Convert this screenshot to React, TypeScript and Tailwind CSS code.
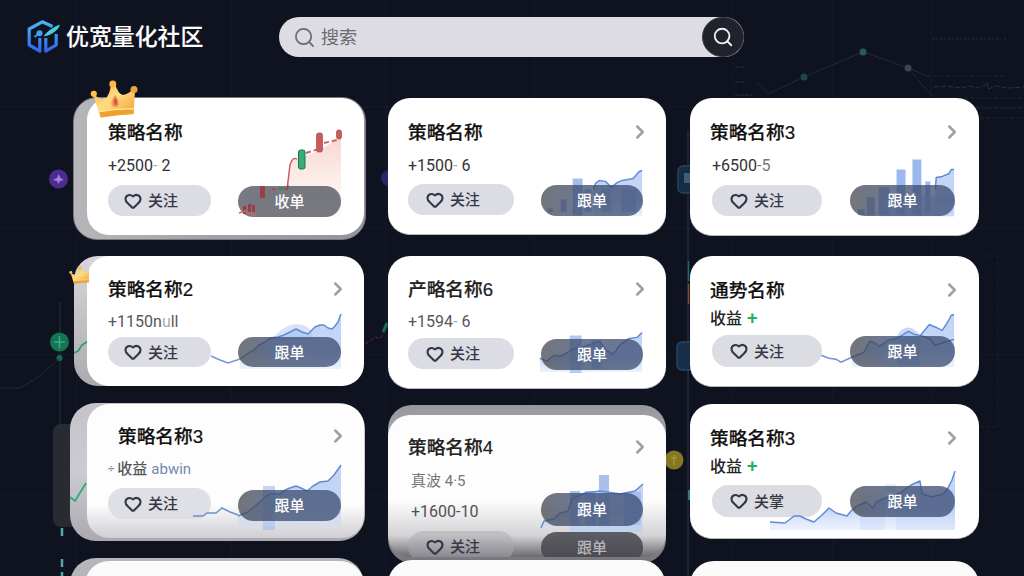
import type { ReactNode } from "react";
import { ChevronRight, Heart, Search } from "lucide-react";
import clsx from "clsx";

const fontCls = "font-['Liberation_Sans','Noto_Sans_CJK_SC',sans-serif]";

type CardProps = {
  title: string;
  className: string;
  // x, y, width, height of the card on the page, shared by its chart
  box: [number, number, number, number];
  titleCls?: string;
  chevron?: boolean;
  back?: ReactNode;
  chart?: ReactNode;
  children?: ReactNode;
};

function Card({ title, className, box, titleCls, chevron = true, back, chart, children }: CardProps) {
  return (
    <div className="relative shrink-0">
      {back}
      <article className={clsx("relative overflow-hidden rounded-[22px]", className)}>
        <svg className="absolute inset-0 h-full w-full" viewBox={box.join(" ")} fill="none">
          {chart}
        </svg>
        <div className="relative flex h-6 items-center justify-between">
          <h2 className={clsx("whitespace-nowrap pt-0.5 text-[18.7px] font-medium leading-6 [-webkit-text-stroke:0.2px]", titleCls ?? "text-[#111]")}>
            {title}
          </h2>
          {chevron && <ChevronRight className="-mr-[8px] size-[22px] text-[#a0a0a3]" strokeWidth={2.7} />}
        </div>
        {children}
      </article>
    </div>
  );
}

function Value({ children, className }: { children: ReactNode; className: string }) {
  return (
    <p className={clsx("relative flex h-5 items-center whitespace-nowrap pt-px font-[Roboto,'Noto_Sans_CJK_SC',sans-serif] text-base", className)}>
      {children}
    </p>
  );
}

function FollowPill({ className, label = "关注" }: { className: string; label?: string }) {
  return (
    <button className={clsx("flex items-center gap-[6px] rounded-full text-[15px] font-medium text-[#363745]", className)}>
      <Heart className="size-[18px]" strokeWidth={2.8} />
      <span className="leading-none">{label}</span>
    </button>
  );
}

function CopyPill({ className, label = "跟单" }: { className: string; label?: string }) {
  return (
    <button className={clsx("flex items-center justify-center rounded-full text-[15px] font-medium leading-none", className)}>
      {label}
    </button>
  );
}

const dark = "bg-gradient-to-r from-[#44474f]/75 via-[#3c4b6c]/75 via-35% to-[#394b71]/75 text-white";

function Area({ id, line, bottom, right }: { id: string; line: string; bottom: number; right: number }) {
  const startX = line.split(" ")[0].slice(1).split(",")[0];
  return (
    <>
      <defs>
        <linearGradient id={id} x1="0" y1="0" x2="0" y2="1">
          <stop offset="0" stopColor="#a3bff0" stopOpacity=".65" />
          <stop offset=".65" stopColor="#a3c0f4" stopOpacity=".65" />
          <stop offset="1" stopColor="#c4d6f8" stopOpacity=".3" />
        </linearGradient>
      </defs>
      <path d={`${line} L${right},${bottom} L${startX},${bottom} Z`} fill={`url(#${id})`} />
      <path d={line} stroke="#638ad4" strokeWidth="1.5" strokeLinejoin="round" />
    </>
  );
}

function Crown({ className, id, gem }: { className: string; id: string; gem?: boolean }) {
  return (
    <svg className={className} viewBox="0 0 48 38" fill="none">
      <defs>
        <linearGradient id={id} x1="0" y1="0" x2="1" y2="1">
          <stop offset="0" stopColor="#f9b03c" />
          <stop offset=".45" stopColor="#ffdc80" />
          <stop offset="1" stopColor="#ee9b2c" />
        </linearGradient>
      </defs>
      <path d="M3 14 Q10 20 15 19 Q20 15 21 4 H25 Q28 14 33 15 Q39 14 43 9 L45 11 L43.5 34 Q28 34.5 10.5 37.5 Z" fill={`url(#${id})`} />
      <path d="M9.5 31.5 Q26 28.5 43.5 29 L43.5 34 Q28 34.5 10.5 37.5 Z" fill="#f0a02e" />
      <path d="M9.5 31.5 Q26 28.5 43.5 29" stroke="#ffe9a0" strokeWidth="1.3" />
      <circle cx="3.8" cy="13.8" r="3.1" fill="#ffc451" />
      <circle cx="22.8" cy="4" r="3.5" fill="#fbb648" />
      <circle cx="44" cy="9.5" r="3.5" fill="#f3a43d" />
      {gem && (
        <>
          <path d="M25 15 Q31 22 28 26 Q24.5 29 21.5 25 Q20.5 21 25 15Z" fill="#f09a5a" />
          <path d="M25 17 Q29 23 26.5 25.5 Q22 25.5 25 17Z" fill="#dc5638" />
        </>
      )}
    </svg>
  );
}

function Logo() {
  return (
    <svg className="h-[34px] w-[34px]" viewBox="0 0 34 34" fill="none">
      <defs>
        <linearGradient id="logo" gradientUnits="userSpaceOnUse" x1="0" y1="0" x2="0" y2="34">
          <stop offset="0" stopColor="#4ab9f0" />
          <stop offset=".5" stopColor="#3b8df2" />
          <stop offset="1" stopColor="#2f5df0" />
        </linearGradient>
      </defs>
      <g stroke="url(#logo)" strokeLinejoin="round">
        <path d="M26.5 6.5 L16.3 1.8 L3.2 9 V25 L13.8 31.2 V18" strokeWidth="3.2" />
        <path d="M19.8 18 V31.2 L30.2 25 V14" strokeWidth="3.2" />
        <path d="M8.500 17 L13 13.500" strokeWidth="2.2" />
      </g>
      <circle cx="13.5" cy="13.3" r="3" fill="#3da4f0" />
      <path d="M17.5 16.5 Q22 9.5 33.5 4.5 Q34 7.5 29 11.500 Q24.5 15.5 17.5 16.5Z" fill="#43d0dd" />
    </svg>
  );
}

function Backdrop() {
  return (
    <svg className="absolute inset-0 h-full w-full" viewBox="0 0 1024 576" fill="none">
      <g stroke="#1b2130" strokeWidth="1">
        <path d="M77 0V576M231 0V576M386 0V576M534 0V576M733 0V576M833 0V576M931 0V576" opacity=".5" />
        <path d="M0 107H1024M0 228H1024M0 355H1024M0 495H1024" opacity=".5" />
        <path d="M688 130V576" stroke="#1c2533" strokeWidth="2" />
        <path d="M979 256H998V427H979" strokeDasharray="4 2" />
      </g>
      <path d="M757 82 L768 94 L804 77 L863 52 L908 68 L932 96 M908 68 L930 77" stroke="#1d2b34" />
      <circle cx="804" cy="77" r="3.5" fill="#1e464f" />
      <circle cx="863" cy="52" r="3.5" fill="#285962" />
      <circle cx="908" cy="68" r="3.5" fill="#3c4650" />
      <path d="M932 39H1006" stroke="#293140" strokeWidth="3" strokeDasharray="3 2 1 2" opacity=".4" />
      <path d="M934 76H1004M934 98H1024M934 108H1024M980 118H1024" stroke="#182930" strokeDasharray="4 2" />
      <path d="M934 87 L946 86 L960 88 L970 86 L978 88 L985 85 L987 82 L988 89 L996 86 L1008 88 L1024 87" stroke="#173d3c" strokeDasharray="5 2" />
      <path d="M735 67H745M735 82H745M735 95H752" stroke="#1a222e" strokeWidth="2" strokeDasharray="4 1" />

      <circle cx="58.5" cy="179" r="9.5" fill="#4b2c91" />
      <path d="M58.5 174 L60.5 178 L64 180 L60 181 L58.5 184 L57 181 L53 180 L57 178Z" fill="#a880dc" />
      <circle cx="389" cy="178" r="8" fill="#2a2469" />
      <path d="M60 302V424" stroke="#182a31" strokeWidth="1.5" />
      <circle cx="59.5" cy="342" r="9.5" fill="#137554" />
      <path d="M59.5 336V348M54 342H65" stroke="#41a886" strokeWidth="1.5" />
      <circle cx="59.5" cy="358" r="3" fill="#166b51" />
      <path d="M59 359 L38 377 L20 388 H0" stroke="#12332f" />
      <path d="M62 528V536M62 559V567M62 572V576" stroke="#4ba9b0" strokeWidth="2.5" />
      <path d="M365 344 L376 337 L380 339 L388 326" stroke="#5a2938" strokeDasharray="4 2" />
      <path d="M383 332 L387 323" stroke="#15704f" strokeWidth="3" />
      <rect x="678" y="166" width="18" height="27" rx="5" fill="#162b44" stroke="#234560" strokeWidth="1.5" />
      <path d="M684 173H692V183H684Z" fill="#445b78" />
      <rect x="677" y="342" width="18" height="28" rx="5" fill="#192e48" stroke="#254565" strokeWidth="1.5" />
      <path d="M688.5 261V281" stroke="#186a70" strokeWidth="1.5" />
      <path d="M688.5 284V304" stroke="#8a4a2c" strokeWidth="1.5" />
      <circle cx="674" cy="460" r="9.5" fill="#85791f" />
      <path d="M674 455V465M671 458H677" stroke="#a3963a" strokeWidth="1.5" />
      <path d="M689 490V500" stroke="#387586" strokeWidth="2" />
    </svg>
  );
}

export default function App() {
  return (
    <div className={clsx("relative h-[576px] w-[1024px] overflow-hidden bg-[#0f1320]", fontCls)}>
      <Backdrop />

      <header className="relative flex h-[74px] items-center pl-[26px]">
        <div className="flex w-[253px] items-center gap-[6px]">
          <Logo />
          <h1 className="whitespace-nowrap text-[22.9px] font-medium leading-none text-white [-webkit-text-stroke:0.1px]">优宽量化社区</h1>
        </div>
        <div className="flex h-10 w-[465px] items-center rounded-full bg-[#dddce3] pl-[14px]">
          <Search className="size-[23px] text-[#6a6a70]" strokeWidth={1.8} />
          <span className="ml-[5px] flex-1 pt-0.5 text-[18px] leading-none text-[#6c6b72]">搜索</span>
          <button className="flex h-10 w-[42px] items-center justify-center rounded-full border border-[#3a3c43] bg-[#20232b]">
            <Search className="size-[22px] text-[#f0f0f2]" strokeWidth={2} />
          </button>
        </div>
      </header>

      <main className="relative flex items-start gap-6 pl-[87px] pt-6">
        <section className="flex w-[277px] flex-col">
          <Card
            title="策略名称"
            box={[87, 98, 277, 137]}
            className="h-[137px] bg-white pl-[21px] pr-[23px] pt-[22px]"
            chevron={false}
            back={
              <>
                <div className="absolute -left-[14px] -right-[2px] -top-px h-[143px] rounded-[24px] border border-[#77787e] bg-gradient-to-r from-[#b6b6ba] via-[#a0a1a6] to-[#94959b]" />
                <Crown id="crownBig" gem className="absolute -top-[18px] left-[3px] z-10 h-[38px] w-12" />
              </>
            }
            chart={
              <>
                <defs>
                  <linearGradient id="red" x1="0" y1="0" x2="0" y2="1">
                    <stop offset="0" stopColor="#f5c4ba" stopOpacity=".7" />
                    <stop offset="1" stopColor="#fbe4de" stopOpacity=".2" />
                  </linearGradient>
                </defs>
                <path d="M287 192 L292 161 L301 158 L320 150 L341 137 V217 H239 V213 L262 190Z" fill="url(#red)" />
                <path d="M287 190 L290 165 Q292 157 297 159" stroke="#c5605c" strokeWidth="1.5" />
                <path d="M306 153 L319 149 M324 143 L337 140" stroke="#c86660" strokeWidth="2" strokeDasharray="5 3" />
                <g fill="#c95b58" stroke="#a9494a" strokeWidth=".7">
                  <rect x="316.5" y="133" width="6" height="19" rx="2" />
                  <rect x="336.5" y="130" width="5" height="9" rx="2" />
                </g>
                <rect x="298.5" y="150" width="6.5" height="19" rx="2" fill="#37ae78" stroke="#16774f" />
              </>
            }
          >
            <Value className="mt-[11px] text-[#303136]">+2500<span className="text-[#aaa]">-</span>&nbsp;2</Value>
            <div className="relative mt-[10px] flex justify-between">
              <FollowPill className="h-[31px] w-[103px] bg-[#dcdce5] pl-4" />
              <CopyPill label="收单" className="mt-px h-[31px] w-[103px] bg-[#4a4d5a]/75 text-white" />
              {/* low candles stay visible over the button */}
              <svg className="absolute right-0 top-0 h-8 w-[103px]" viewBox="238 185 103 32" fill="none">
                <path d="M287 190 L288 185" stroke="#a94648" strokeWidth="1.5" />
                <path d="M272 189H287" stroke="#a94648" strokeWidth="1.5" strokeDasharray="4 2" />
                <g fill="#9c3f45">
                  <rect x="260" y="186" width="5" height="12" rx="1" />
                  <rect x="243" y="206" width="3" height="8" />
                  <rect x="248" y="204" width="3" height="9" />
                  <rect x="252" y="205" width="3" height="7" />
                </g>
                <path d="M278 188.5H285" stroke="#41876a" strokeWidth="2.5" />
                <path d="M239 213L245 211L256 215.5" stroke="#cb6768" strokeWidth="1.5" />
              </svg>
            </div>
          </Card>

          <Card
            title="策略名称2"
            box={[87, 256, 277, 130]}
            className="mt-[21px] h-[130px] bg-white pl-[21px] pr-[23px] pt-[21px]"
            back={
              <>
                <div className="absolute -left-[13px] top-[21px] h-[130px] w-20 rounded-[24px] bg-gradient-to-b from-[#d8d8dc] to-[#aaaaaf]" />
                <svg className="absolute -left-[13px] top-[105px] h-5 w-4" viewBox="0 0 16 20" fill="none">
                  <path d="M0 13 L4 11 L8 5 L14 1" stroke="#2b9b75" strokeWidth="1.7" />
                </svg>
                <Crown id="crownSmall" className="absolute -left-[18px] top-[30px] z-10 h-5 w-[23px] [clip-path:inset(0_3px_0_0)]" />
              </>
            }
            chart={
              <>
                <path d="M280 331 Q298 317 312 331 V340 H270Z" fill="#d6e2f8" />
                <path d="M211 356 L220 360 L228 363 L240 359" stroke="#709cd5" strokeWidth="1.5" />
                <Area id="a2" right={341} bottom={369} line="M240,359 L250,352 L254,350 L259,345 L265,342 L270,338 L278,337 L284,335 L290,332 L296,329 L302,332 L308,334 L312,330 L315,327 L320,325 L324,325 L328,328 L332,329 L335,326 L338,322 L341,314" />
              </>
            }
          >
            <Value className="mt-[10px] text-[#55565e]">+1150n<span className="text-[#aaa]">u</span>ll</Value>
            <div className="relative mt-[6px] flex justify-between">
              <FollowPill className="h-[30px] w-[103px] bg-[#dcdce5] pl-[16px]" />
              <CopyPill className={clsx("h-[30px] w-[103px]", dark)} />
            </div>
          </Card>

          <Card
            title="策略名称3"
            titleCls="pl-[10px] text-[#111]"
            box={[87, 404, 277, 134]}
            className="mt-[18px] h-[134px] bg-gradient-to-b from-[#fdfdfd] from-75% to-[#cfced4] pl-[21px] pr-[23px] pt-5"
            back={
              <>
                <div className="absolute -left-[34px] top-[38px] h-[103px] w-10 rounded-lg bg-[#292b32]" />
                <div className="absolute -left-[17px] -right-[1px] top-[17px] h-[138px] rounded-[26px] bg-gradient-to-b from-[#c4c3ca] via-[#cccbd2] to-[#aaa9b0]" />
                <svg className="absolute -left-[17px] top-[96px] h-8 w-[18px]" viewBox="0 0 18 32" fill="none">
                  <path d="M0 15 L5 19 L16 1" stroke="#28ad78" strokeWidth="1.8" />
                </svg>
              </>
            }
            chart={
              <>
                <path d="M263 486H275V530H263Z" fill="#9dbaec" opacity=".6" />
                <Area id="a3" right={341} bottom={526} line="M238,516 L248,512 L254,507 L260,502 L265,497 L270,494 L280,494 L285,490 L290,488 L296,486 L301,488 L307,491 L313,486 L320,482 L328,481 L334,475 L341,465" />
              </>
            }
          >
            <Value className="mt-[11px] text-[15px] font-medium text-[#555]">
              <span className="mr-[3px] text-[11px] text-[#888]">÷</span>收益<span className="ml-1 font-normal text-[#7389ae]">abwin</span>
            </Value>
            <div className="relative mt-[9px] flex justify-between">
              <FollowPill className="h-[31px] w-[103px] bg-[#dcdce3]/90 pl-4" />
              <CopyPill className={clsx("mt-[2px] h-[31px] w-[103px]", dark)} />
              <svg className="absolute left-[85px] top-[18px] h-3 w-12" viewBox="193 507 48 12" fill="none">
                <path d="M193 517 L203 517 L207 514 L211 514 L216 514 L222 509 L230 513 L238 516" stroke="#6e92cf" strokeWidth="1.5" />
              </svg>
            </div>
          </Card>

          <div className="relative mt-5 h-10 w-[294px] -translate-x-[17px] rounded-t-[26px] bg-[#b5b5ba] pl-[15px] pt-[3px]">
            <div className="h-10 rounded-t-[24px] bg-[#fafafa]" />
          </div>
        </section>

        <section className="flex w-[278px] flex-col">
          <Card
            title="策略名称"
            box={[388, 98, 278, 137]}
            className="h-[137px] border-b border-[#b9b9bd] bg-white pl-5 pr-[23px] pt-[22px]"
            chart={
              <>
                <g fill="#8daee8" opacity=".8">
                  <path d="M573 179H583V216H573Z M561 200H567V213H561Z M585 190H592V213H585Z M548 209H553V213H548Z" />
                  <path d="M602 190H612V213H602Z M622 190H637V213H622Z" />
                </g>
                <Area id="b1" right={643} bottom={217} line="M594,190 L596,184 L600,181 L606,182 L612,188 L618,183 L623,181 L634,179 L640,172 L643,171" />
              </>
            }
          >
            <Value className="mt-[11px] text-[#333]">+1500<span className="text-[#aaa]">-</span>&nbsp;6</Value>
            <div className="relative mt-[9px] flex justify-between">
              <FollowPill className="h-[31px] w-[106px] bg-[#dcdce5] pl-[18px]" />
              <CopyPill className={clsx("mt-px h-[31px] w-[102px]", dark)} />
            </div>
          </Card>

          <Card
            title="产略名称6"
            box={[388, 256, 278, 133]}
            className="mt-[21px] h-[133px] border-b border-[#b9b9bd] bg-white pl-5 pr-[23px] pt-[21px]"
            titleCls="text-[#222]"
            chart={
              <>
                <path d="M570 336H582V374H570Z M592 341H602V370H592Z" fill="#9dbaec" opacity=".8" />
                <Area id="b2" right={643} bottom={373} line="M540,359 L547,362 L554,356 L560,357 L565,355 L573,350 L583,348 L600,342 L607,351 L614,355 L621,345 L630,339 L638,338 L643,333" />
              </>
            }
          >
            <Value className="mt-[10px] text-[#55565e]">+1594<span className="text-[#aaa]">-</span>&nbsp;6</Value>
            <div className="relative mt-[7px] flex justify-between">
              <FollowPill className="h-[31px] w-[106px] bg-[#dcdce5] pl-[18px]" />
              <CopyPill className={clsx("mt-px h-[31px] w-[102px]", dark)} />
            </div>
          </Card>

          <Card
            title="策略名称4"
            box={[388, 415, 278, 142]}
            className="mt-[26px] h-[142px] bg-gradient-to-b from-[#fdfdfd] from-60% via-[#d3d3d6] via-85% to-[#6c6c70] pl-5 pr-[23px] pt-5"
            titleCls="text-[#222]"
            back={
              <div className="absolute inset-x-0 top-4 h-[158px] rounded-[24px] bg-gradient-to-b from-[#97979c] via-[#c0c0c5] to-[#747479]" />
            }
            chart={
              <>
                <path d="M599 475H609V526H599Z M570 491H580V528H570Z M585 491H596V525H585Z M624 492H641V525H624Z" fill="#8cabe6" opacity=".75" />
                <path d="M570 525H643V532H570Z" fill="#c3d2ef" />
                <Area id="b3" right={643} bottom={526} line="M541,528 L544,521 L554,519 L560,513 L568,511 L572,499 L585,493 L600,491 L620,494 L635,491 L643,484" />
              </>
            }
          >
            <Value className="mt-3 pl-[3px] text-[15px] text-[#77777b]">真波 4·5</Value>
            <div className="relative mt-[2px] flex justify-between">
              <Value className="mt-2 pl-[3px] text-[#505055]">+1600-10</Value>
              <CopyPill className={clsx("h-[33px] w-[102px]", dark)} />
            </div>
            <div className="relative mt-[5px] flex justify-between">
              <FollowPill className="h-[31px] w-[106px] bg-[#a8a8b0]/50 pl-[18px]" />
              <CopyPill className="mt-px h-[31px] w-[102px] bg-[#45464d]/85 text-[#b5b5ba]" />
            </div>
          </Card>

          <div className="relative mt-[3px] h-10 w-[277px] rounded-t-[24px] bg-[#fafafa]" />
        </section>

        <section className="flex w-[289px] flex-col">
          <Card
            title="策略名称3"
            box={[690, 98, 289, 138]}
            className="h-[138px] border-b border-[#b9b9bd] bg-white pl-5 pr-6 pt-[22px]"
            chart={
              <>
                <path d="M897 170H906V216H897Z M913 160H922V216H913Z M879 188H890V216H879Z M867 198H875V216H867Z M858 210H865V216H858Z M926 182H931V214H926Z" fill="#83a8e9" opacity=".8" />
                <path d="M880 196H955V217H880Z" fill="#a9c3f3" opacity=".6" />
                <Area id="c1" right={955} bottom={217} line="M936,190 L937,178 L943,177 L950,174 L952,170 L955,170" />
              </>
            }
          >
            <Value className="mt-[11px] pl-0.5 text-[#333]">+6500<span className="text-[#777]">-5</span></Value>
            <div className="relative mt-[10px] flex justify-between pl-0.5">
              <FollowPill className="h-[31px] w-[110px] bg-[#dcdce5] pl-[18px]" />
              <CopyPill className={clsx("h-[31px] w-[105px]", dark)} />
            </div>
          </Card>

          <Card
            title="通势名称"
            box={[690, 256, 289, 131]}
            className="mt-5 h-[131px] border-b border-[#b9b9bd] bg-white pl-5 pr-6 pt-[22px]"
            chart={
              <>
                <path d="M898 335 Q908 321 920 335 V366 H898Z" fill="#c8d9f7" />
                <path d="M821 356 L829 359 L836 360 L841 363 L852 358" stroke="#6994d5" strokeWidth="1.5" />
                <Area id="c2" right={955} bottom={368} line="M852,358 L864,353 L870,342 L874,343 L880,347 L888,341 L894,340 L899,338 L909,332 L915,335 L921,336 L926,330 L930,325 L937,328 L943,331 L947,325 L950,320 L952,316 L955,315" />
                <path d="M921,336 L930,339 L936,346 L948,342 L955,340" stroke="#5577b8" strokeWidth="1.5" />
              </>
            }
          >
            <Value className="mt-[6px] font-medium text-[#222]">收益<span className="ml-[5px] text-[19px] text-[#29ae61]">+</span></Value>
            <div className="relative mt-[7px] flex justify-between pl-0.5">
              <FollowPill className="h-8 w-[110px] bg-[#dcdce3] pl-[18px]" />
              <CopyPill className={clsx("mt-px h-[31px] w-[105px]", dark)} />
            </div>
          </Card>

          <Card
            title="策略名称3"
            box={[690, 404, 289, 135]}
            className="mt-[17px] h-[135px] border-b border-[#b9b9bd] bg-white pl-5 pr-6 pt-[22px]"
          >
            <Value className="mt-[6px] font-medium text-[#222]">收益<span className="ml-[5px] text-[19px] text-[#29ae61]">+</span></Value>
            <div className="relative mt-[9px] flex justify-between pl-0.5">
              <FollowPill label="关掌" className="h-8 w-[110px] bg-[#dcdce3] pl-[18px]" />
              {/* this line runs over the follow pill, so it is drawn after it */}
              <svg className="absolute -left-5 -top-[81px] h-[135px] w-[289px]" viewBox="690 404 289 135" fill="none">
                <path d="M860 493V530H955V490Z M885 484H896V530H885Z" fill="#adc4ee" opacity=".25" />
                <Area id="c3" right={955} bottom={530} line="M770,522 L785,523 L789,520 L794,516 L800,516 L806,519 L814,522 L822,515 L829,508 L836,513 L847,516 L851,511 L857,506 L866,502 L873,508 L876,502 L883,499 L900,493 L911,485 L920,481 L922,494 L932,497 L943,494 L948,488 L952,480 L955,471" />
              </svg>
              <CopyPill className={clsx("relative mt-px h-[31px] w-[105px]", dark)} />
            </div>
          </Card>

          <div className="relative mt-[22px] h-10 rounded-t-[24px] bg-[#fafafa]" />
        </section>
      </main>
    </div>
  );
}
